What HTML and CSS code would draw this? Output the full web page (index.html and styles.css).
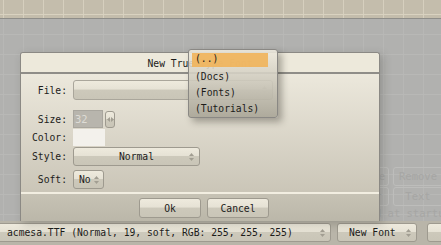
FILE: index.html
```html
<!DOCTYPE html>
<html lang="en">
<head>
  <meta charset="UTF-8" />
  <title>New True Type Font</title>
  <link rel="stylesheet" href="styles.css">
</head>
<body>
  <div class="app">
    <div class="toolbar"></div>
    <div class="workspace">
      <div class="bg-panel">
        <div class="bg-row">
          <span class="bg-btn small">Change</span>
          <span class="bg-btn">Remove</span>
        </div>
        <div class="bg-row">
          <span class="bg-btn small">Color</span>
          <span class="bg-btn">Text</span>
        </div>
        <div class="bg-note">created at startup</div>
      </div>
    </div>
    <div class="statusbar">
      <div class="combo font-combo">
        <span>acmesa.TTF (Normal, 19, soft, RGB: 255, 255, 255)</span>
        <svg class="updown" width="5" height="8" viewBox="0 0 5 8"><polygon points="0,3 2.5,0 5,3"/><polygon points="0,5 2.5,8 5,5"/></svg>
      </div>
      <div class="combo new-combo">
        <span>New Font</span>
        <svg class="updown" width="5" height="8" viewBox="0 0 5 8"><polygon points="0,3 2.5,0 5,3"/><polygon points="0,5 2.5,8 5,5"/></svg>
      </div>
      <div class="combo edge-combo"></div>
    </div>

    <!-- modal dialog -->
    <div class="dialog">
      <div class="dialog-title">New True Type Font</div>
      <div class="dialog-body">
        <div class="row file-row">
          <label>File:</label>
          <div class="combo file-combo">
            <span></span>
            <svg class="updown faint" width="5" height="8" viewBox="0 0 5 8"><polygon points="0,3 2.5,0 5,3"/><polygon points="0,5 2.5,8 5,5"/></svg>
          </div>
        </div>
        <div class="row size-row">
          <label>Size:</label>
          <div class="size-input">32</div>
          <div class="spin">
            <svg width="7" height="5" viewBox="0 0 7 5"><polygon points="3,0 0,2.5 3,5"/><polygon points="4,0 7,2.5 4,5"/></svg>
          </div>
        </div>
        <div class="row color-row">
          <label>Color:</label>
          <div class="color-box"></div>
        </div>
        <div class="row style-row">
          <label>Style:</label>
          <div class="combo style-combo">
            <span>Normal</span>
            <svg class="updown" width="5" height="8" viewBox="0 0 5 8"><polygon points="0,3 2.5,0 5,3"/><polygon points="0,5 2.5,8 5,5"/></svg>
          </div>
        </div>
        <div class="row soft-row">
          <label>Soft:</label>
          <div class="combo soft-combo">
            <span>No</span>
            <svg class="updown" width="5" height="8" viewBox="0 0 5 8"><polygon points="0,3 2.5,0 5,3"/><polygon points="0,5 2.5,8 5,5"/></svg>
          </div>
        </div>
      </div>
      <div class="dialog-buttons">
        <button class="btn">Ok</button>
        <button class="btn">Cancel</button>
      </div>
    </div>

    <!-- file dropdown -->
    <div class="popup">
      <div class="item active">(..)</div>
      <div class="item">(Docs)</div>
      <div class="item">(Fonts)</div>
      <div class="item">(Tutorials)</div>
    </div>
  </div>
</body>
</html>
```

FILE: styles.css
```css
* {
  box-sizing: border-box;
}

body {
  margin: 0;
  font-family: 'DejaVu Sans Mono', 'Liberation Mono', monospace;
  font-size: 9.7px;
  color: #1c1c1a;
  overflow: hidden;
}

.app {
  position: relative;
  width: 441px;
  height: 245px;
  overflow: hidden;
  background: #b3b1a9;
}

.toolbar {
  height: 19px;
  background-color: #c4bdac;
  background-image:
    linear-gradient(to bottom, transparent 14px, #d9d2c0 14px, #d9d2c0 15px, transparent 15px),
    repeating-linear-gradient(to right, transparent 0, transparent 3px, #d6cfbe 3px, #d6cfbe 4px, transparent 4px, transparent 20px);
  border-bottom: 1px solid #8e8d89;
}

.workspace {
  height: 202px;
  background-color: #b1b1af;
  background-image:
    repeating-linear-gradient(to bottom, transparent 0, transparent 15px, #b8b8b6 15px, #b8b8b6 16px, transparent 16px, transparent 20px),
    repeating-linear-gradient(to right, transparent 0, transparent 3px, #b7b7b5 3px, #b7b7b5 4px, transparent 4px, transparent 20px);
  display: flex;
  justify-content: flex-end;
  align-items: flex-end;
}

.bg-panel {
  width: 100px;
  margin-right: -2px;
  display: flex;
  flex-direction: column;
  gap: 1px;
  color: #a6a6a4;
}

.bg-row {
  display: flex;
  gap: 4px;
}

.bg-btn {
  flex: 1;
  height: 19px;
  border: 1px solid #bdbdbb;
  border-radius: 3px;
  text-align: center;
  line-height: 17px;
  font-size: 10.5px;
}

.bg-btn.small {
  flex: 0 0 46px;
}

.bg-note {
  height: 14px;
  margin-left: -6px;
  font-size: 10.5px;
  white-space: nowrap;
  overflow: hidden;
}

.statusbar {
  height: 24px;
  background: #b9b5a9;
  display: flex;
  gap: 6px;
  padding-top: 2px;
}

.combo {
  flex: none;
  height: 19px;
  border: 1px solid #9e9a8f;
  border-radius: 3px;
  background: linear-gradient(to bottom, #eeeadd 0, #e6e2d5 45%, #cdc9bb 50%, #c9c5b7 100%);
  display: flex;
  align-items: center;
  padding: 0 5px;
  gap: 4px;
  white-space: nowrap;
}

.combo span {
  flex: 1;
}

.updown {
  fill: #a29e92;
  flex: none;
}

.updown.faint {
  fill: #c4c0b4;
}

.font-combo {
  margin-left: -4px;
  width: 335px;
  padding-left: 10px;
}

.new-combo {
  width: 80px;
  padding-left: 11px;
}

.edge-combo {
  width: 30px;
  margin-left: 4px;
}

.dialog {
  position: absolute;
  left: 20px;
  top: 52px;
  width: 360px;
  height: 169px;
  border: 1px solid #8b8984;
  border-bottom: none;
  border-radius: 3px 3px 0 0;
  background: rgba(236, 232, 220, 0.96);
  box-shadow: 3px 3px 8px rgba(60, 58, 50, 0.25);
  display: flex;
  flex-direction: column;
}

.dialog-title {
  height: 21px;
  line-height: 22px;
  text-align: center;
  background: #ede9db;
  border-bottom: 2px solid #8f8d88;
  border-radius: 3px 3px 0 0;
}

.dialog-body {
  height: 120px;
  background: linear-gradient(to bottom, rgba(236, 232, 220, 0.95) 0, rgba(200, 195, 181, 0.93) 100%);
  border-bottom: 2px solid #f2eee1;
  padding-top: 6px;
  display: flex;
  flex-direction: column;
}

.row {
  display: flex;
  align-items: center;
  flex: none;
}

.row label {
  width: 46px;
  text-align: right;
  margin-right: 6px;
}

.file-row {
  height: 20px;
}

.file-combo {
  width: 200px;
  height: 20px;
  border-color: #aaa69b;
}

.size-row {
  margin-top: 10px;
  height: 18px;
}

.size-input {
  width: 30px;
  height: 18px;
  background: #b8b5ad;
  border: 1px solid #a9a69e;
  color: #dedcd6;
  padding-left: 1px;
  line-height: 16px;
  font-size: 10.5px;
}

.spin {
  width: 10px;
  height: 17px;
  margin-left: 2px;
  border: 1px solid #9e9a8f;
  border-radius: 3px;
  background: linear-gradient(to bottom, #eeeadd 0, #e6e2d5 45%, #cdc9bb 50%, #c9c5b7 100%);
  display: flex;
  align-items: center;
  justify-content: center;
}

.spin svg {
  fill: #a29e92;
}

.color-row {
  height: 18px;
}

.color-box {
  width: 32px;
  height: 17px;
  background: #f3f1ec;
}

.style-row {
  margin-top: 1px;
  height: 19px;
}

.style-combo {
  width: 127px;
  text-align: center;
  padding-left: 14px;
}

.soft-row {
  margin-top: 4px;
  height: 19px;
}

.soft-combo {
  width: 31px;
  padding: 0 4px 0 5px;
  gap: 2px;
}

.dialog-buttons {
  flex: 1;
  background: linear-gradient(to bottom, rgba(196, 192, 178, 0.94), rgba(184, 180, 166, 0.94));
  display: flex;
  justify-content: center;
  align-items: flex-start;
  gap: 6px;
  padding: 4px 0 0 8px;
}

.btn {
  width: 62px;
  height: 20px;
  font-family: inherit;
  font-size: inherit;
  color: inherit;
  border: 1px solid #9e9a8f;
  border-radius: 3px;
  background: linear-gradient(to bottom, #eeeadd 0, #e6e2d5 45%, #cdc9bb 50%, #c9c5b7 100%);
  padding: 0;
}

.popup {
  position: absolute;
  left: 188px;
  top: 49px;
  width: 90px;
  height: 69px;
  padding: 3px 9px 0 3px;
  border: 1px solid #8a8884;
  border-radius: 3px;
  background: linear-gradient(to bottom, rgba(238, 234, 222, 0.88), rgba(170, 166, 152, 0.92));
  box-shadow: 4px 4px 7px rgba(40, 38, 30, 0.35);
}

.item {
  height: 16px;
  line-height: 15px;
  padding-left: 3px;
  white-space: nowrap;
}

.item.active {
  background: rgba(240, 180, 92, 0.92);
  height: 14px;
  line-height: 11px;
  margin-bottom: 2px;
}
```
